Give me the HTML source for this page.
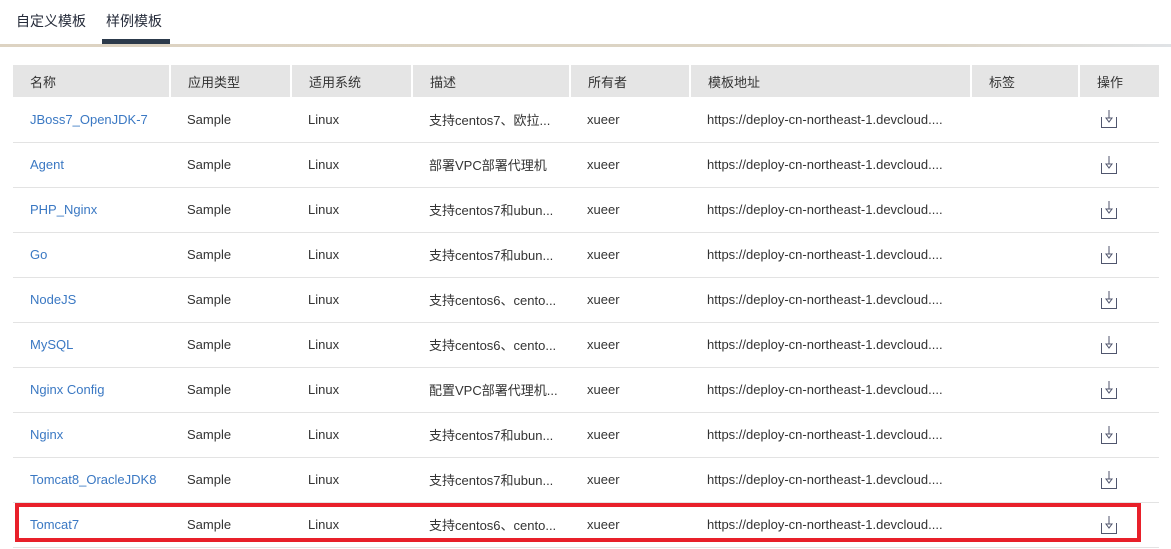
<!DOCTYPE html>
<html><head><meta charset="utf-8"><style>
*{margin:0;padding:0;box-sizing:border-box}
body{width:1171px;height:549px;background:#fff;font-family:"Liberation Sans","Noto Sans CJK SC",sans-serif;font-size:13px;color:#333;position:relative;overflow:hidden}
.tab{position:absolute;top:11px;font-size:14px;color:#252b3a}
.line{position:absolute;top:44px;left:0;width:1171px;height:3px;background:linear-gradient(90deg,#ddd3c2,#dcd4c5 80%,#e0e3e6)}
.bar{position:absolute;top:39px;left:102px;width:68px;height:5px;background:#2c3a4b}
table{position:absolute;left:13px;top:65px;border-collapse:collapse;width:1146px}
th{background:#e5e5e5;height:32px;text-align:left;font-weight:normal;padding-left:17px;border-left:2px solid #fff;color:#333}
th:first-child{border-left:none}
td{height:45px;padding-left:17px;border-bottom:1px solid #e3e3e3;white-space:nowrap}
td a{color:#3a78c3;text-decoration:none}
.red{position:absolute;left:15px;top:503px;width:1126px;height:39px;border:4px solid #e8202a}
svg{display:block}
</style></head><body>
<div class="tab" style="left:16px">自定义模板</div>
<div class="tab" style="left:106px">样例模板</div>
<div class="line"></div><div class="bar"></div>
<table>
<colgroup><col style="width:157px"><col style="width:121px"><col style="width:121px"><col style="width:158px"><col style="width:120px"><col style="width:281px"><col style="width:108px"><col style="width:80px"></colgroup>
<tr><th>名称</th><th>应用类型</th><th>适用系统</th><th>描述</th><th>所有者</th><th>模板地址</th><th>标签</th><th>操作</th></tr>
<tbody id="tb"></tbody>
</table>
<div class="red"></div>
<script>
var r=[["JBoss7_OpenJDK-7","支持centos7、欧拉..."],["Agent","部署VPC部署代理机"],["PHP_Nginx","支持centos7和ubun..."],["Go","支持centos7和ubun..."],["NodeJS","支持centos6、cento..."],["MySQL","支持centos6、cento..."],["Nginx Config","配置VPC部署代理机..."],["Nginx","支持centos7和ubun..."],["Tomcat8_OracleJDK8","支持centos7和ubun..."],["Tomcat7","支持centos6、cento..."]];
var ic='<svg width="18" height="20" viewBox="0 0 18 20" fill="none" stroke="#50566e" stroke-width="1"><path d="M1.5 8v10.5h15V8"/><path d="M9 1v8"/><path d="M6 9h6l-3 4z"/></svg>';
var h="";r.forEach(function(x){h+='<tr><td><a>'+x[0]+'</a></td><td>Sample</td><td>Linux</td><td>'+x[1]+'</td><td>xueer</td><td>https://deploy-cn-northeast-1.devcloud....</td><td></td><td style="padding-left:21px">'+ic+'</td></tr>'});
document.getElementById("tb").innerHTML=h;
</script>
</body></html>
